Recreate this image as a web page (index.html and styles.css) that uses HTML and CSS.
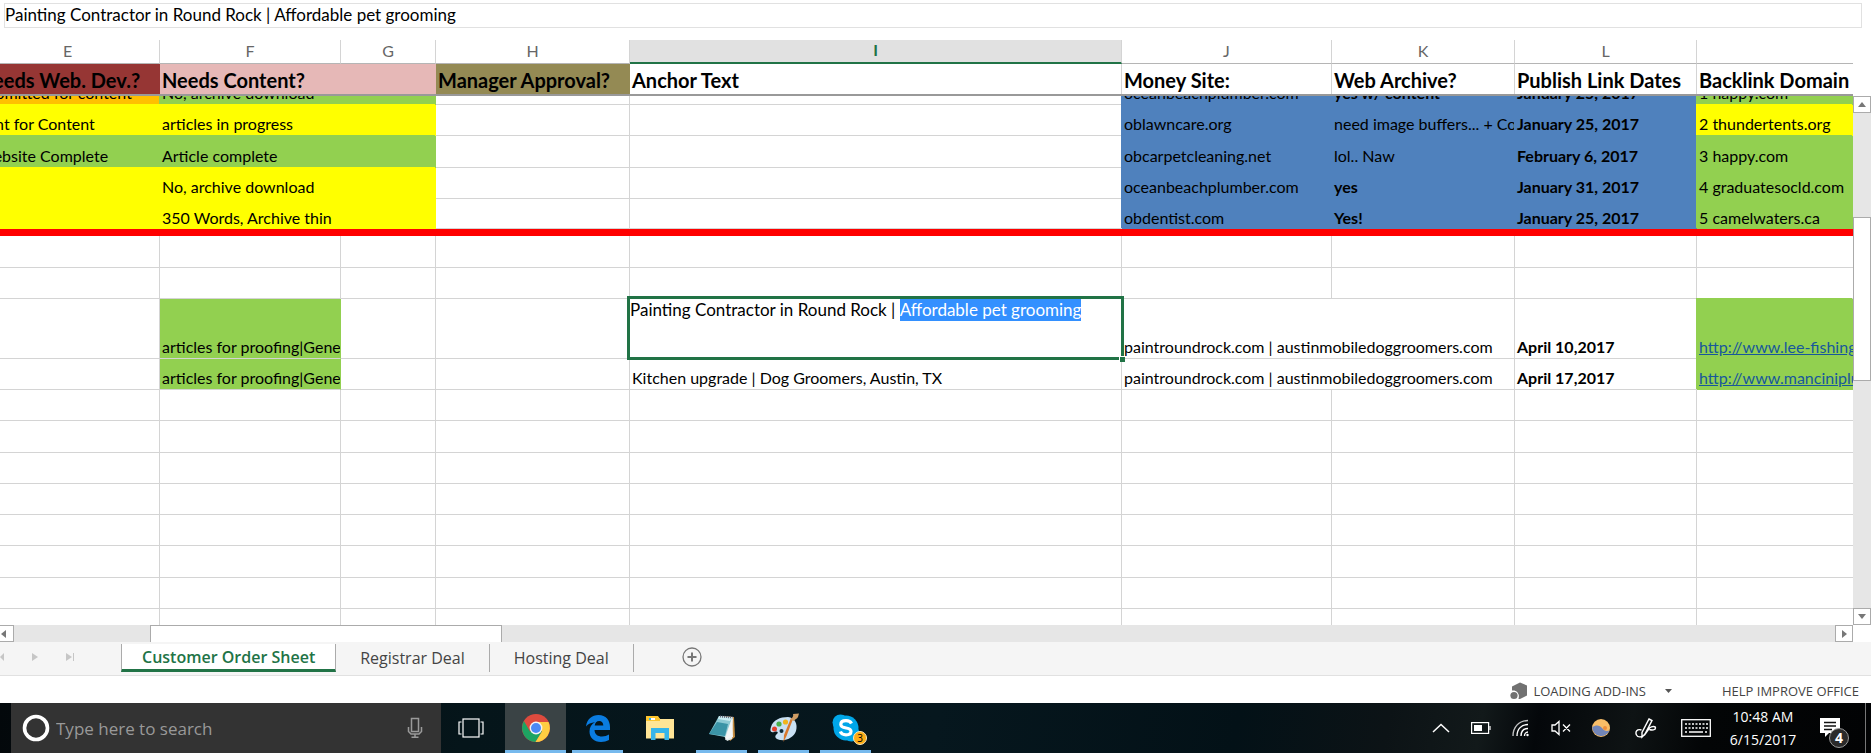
FILE: index.html
```html
<!DOCTYPE html>
<html lang="en">
<head>
    <meta charset="UTF-8">
    <meta name="viewport" content="width=device-width, initial-scale=1.0">
    <title>Customer Order Sheet</title>
    <link rel="stylesheet" href="styles.css">
</head>
<body>
    <!-- Formula bar -->
    <div class="formula-bar">
        <input class="formula-input" type="text" aria-label="Formula bar" value="Painting Contractor in Round Rock | Affordable pet grooming">
    </div>

    <!-- Frozen header rows -->
    <div class="frozen">
        <table class="sheet">
            <colgroup>
                <col class="col-e"><col class="col-f"><col class="col-g"><col class="col-h"><col class="col-i"><col class="col-j"><col class="col-k"><col class="col-l"><col class="col-m">
            </colgroup>
            <tr class="letters">
                <th>E</th><th>F</th><th>G</th><th>H</th><th class="current">I</th><th>J</th><th>K</th><th>L</th><th></th>
            </tr>
            <tr class="titles">
                <th class="maroon">Needs Web. Dev.?</th>
                <th class="pink">Needs Content?</th>
                <th class="pink"></th>
                <th class="olive">Manager Approval?</th>
                <th>Anchor Text</th>
                <th>Money Site:</th>
                <th>Web Archive?</th>
                <th>Publish Link Dates</th>
                <th>Backlink Domain</th>
            </tr>
        </table>
    </div>

    <!-- Scrolling cells -->
    <div class="grid-area">
        <div class="cells">
            <table class="sheet body-rows">
                <colgroup>
                    <col class="col-e"><col class="col-f"><col class="col-g"><col class="col-h"><col class="col-i"><col class="col-j"><col class="col-k"><col class="col-l"><col class="col-m">
                </colgroup>
                <tr>
                    <td class="orange">Submitted for content</td><td class="green">No, archive download</td><td class="green"></td><td></td><td></td>
                    <td class="blue">oceanbeachplumber.com</td><td class="blue bold">yes w/ content</td><td class="blue bold">January 25, 2017</td><td class="green">1 happy.com</td>
                </tr>
                <tr>
                    <td class="yellow">Sent for Content</td><td class="yellow">articles in progress</td><td class="yellow"></td><td></td><td></td>
                    <td class="blue">oblawncare.org</td><td class="blue">need image buffers... + Content</td><td class="blue bold">January 25, 2017</td><td class="yellow">2 thundertents.org</td>
                </tr>
                <tr class="tall">
                    <td class="green">Website Complete</td><td class="green">Article complete</td><td class="green"></td><td></td><td></td>
                    <td class="blue">obcarpetcleaning.net</td><td class="blue">lol.. Naw</td><td class="blue bold">February 6, 2017</td><td class="green">3 happy.com</td>
                </tr>
                <tr>
                    <td class="yellow"></td><td class="yellow">No, archive download</td><td class="yellow"></td><td></td><td></td>
                    <td class="blue">oceanbeachplumber.com</td><td class="blue bold">yes</td><td class="blue bold">January 31, 2017</td><td class="green">4 graduatesocld.com</td>
                </tr>
                <tr class="short">
                    <td class="yellow"></td><td class="yellow">350 Words, Archive thin</td><td class="yellow"></td><td></td><td></td>
                    <td class="blue">obdentist.com</td><td class="blue bold">Yes!</td><td class="blue bold">January 25, 2017</td><td class="green">5 camelwaters.ca</td>
                </tr>
                <tr class="divider"><td colspan="9"></td></tr>
                <tr class="tall"><td></td><td></td><td></td><td></td><td></td><td></td><td></td><td></td><td></td></tr>
                <tr><td></td><td></td><td></td><td></td><td></td><td></td><td></td><td></td><td></td></tr>
                <tr class="double">
                    <td></td><td class="green lined">articles for proofing|General</td><td></td><td></td>
                    <td class="active-cell">
                        <div class="editor" contenteditable="true" role="textbox" aria-label="Cell editor">Painting Contractor in Round Rock | <mark>Affordable pet grooming</mark></div>
                        <span class="fill-handle"></span>
                    </td>
                    <td colspan="2">paintroundrock.com | austinmobiledoggroomers.com</td><td class="bold">April 10,2017</td>
                    <td class="green"><a href="#">http://www.lee-fishing.com</a></td>
                </tr>
                <tr>
                    <td></td><td class="green lined">articles for proofing|General</td><td></td><td></td>
                    <td>Kitchen upgrade | Dog Groomers, Austin, TX</td>
                    <td colspan="2">paintroundrock.com | austinmobiledoggroomers.com</td><td class="bold">April 17,2017</td>
                    <td class="green"><a href="#">http://www.manciniplumbing.com</a></td>
                </tr>
                <tr><td></td><td></td><td></td><td></td><td></td><td></td><td></td><td></td><td></td></tr>
                <tr class="tall"><td></td><td></td><td></td><td></td><td></td><td></td><td></td><td></td><td></td></tr>
                <tr><td></td><td></td><td></td><td></td><td></td><td></td><td></td><td></td><td></td></tr>
                <tr><td></td><td></td><td></td><td></td><td></td><td></td><td></td><td></td><td></td></tr>
                <tr><td></td><td></td><td></td><td></td><td></td><td></td><td></td><td></td><td></td></tr>
                <tr class="tall"><td></td><td></td><td></td><td></td><td></td><td></td><td></td><td></td><td></td></tr>
                <tr><td></td><td></td><td></td><td></td><td></td><td></td><td></td><td></td><td></td></tr>
                <tr><td></td><td></td><td></td><td></td><td></td><td></td><td></td><td></td><td></td></tr>
            </table>
        </div>
        <div class="v-scroll">
            <button class="scroll-btn" aria-label="Scroll up"><svg width="8" height="5"><path d="M0 5L4 0L8 5z"/></svg></button>
            <div class="v-track"><div class="v-thumb"></div></div>
            <button class="scroll-btn" aria-label="Scroll down"><svg width="8" height="5"><path d="M0 0H8L4 5z"/></svg></button>
        </div>
    </div>

    <div class="h-scroll">
        <button class="scroll-btn left" aria-label="Scroll left"><svg width="5" height="8"><path d="M5 0V8L0 4z"/></svg></button>
        <div class="h-track"><div class="h-thumb"></div></div>
        <button class="scroll-btn" aria-label="Scroll right"><svg width="5" height="8"><path d="M0 0V8L5 4z"/></svg></button>
        <div class="corner"></div>
    </div>

    <!-- Sheet tabs -->
    <div class="tab-bar">
        <div class="tab-nav">
            <button aria-label="Previous sheet"><svg width="4" height="8"><path d="M4 0V8L0 4z"/></svg></button>
            <button aria-label="Next sheet"><svg width="6" height="8"><path d="M0 0V8L6 4z"/></svg></button>
            <button aria-label="Last sheet"><svg width="8" height="8"><path d="M0 0V8L6 4zM7 0H8V8H7z"/></svg></button>
        </div>
        <button class="tab selected">Customer Order Sheet</button>
        <button class="tab">Registrar Deal</button>
        <button class="tab">Hosting Deal</button>
        <button class="add-sheet" aria-label="New sheet">
            <svg width="20" height="20" fill="none" stroke="#777"><circle cx="10" cy="10" r="9" stroke-width="1.3"/><path d="M10 5.5V14.5M5.5 10H14.5" stroke-width="2"/></svg>
        </button>
    </div>

    <!-- Status bar -->
    <div class="status-bar">
        <button class="addins">
            <svg width="18" height="18" fill="#717171"><path d="M2 4.5L10 0.5L17 3.5V13.5L10 17H8.5C9.5 13.5 8 10 4.5 8.5H2z"/><circle cx="4" cy="13.5" r="4.6" fill="#fff"/><circle cx="4" cy="13.5" r="3.6"/></svg>
            LOADING ADD-INS
            <svg class="caret" width="7" height="4" fill="#555"><path d="M0 0H7L3.5 4z"/></svg>
        </button>
        <a class="help-link" href="#">HELP IMPROVE OFFICE</a>
    </div>

    <!-- Windows taskbar -->
    <div class="taskbar">
        <div class="search">
            <svg width="28" height="28" fill="none"><circle cx="14" cy="14" r="11.5" stroke="#fff" stroke-width="3.6"/></svg>
            <input type="text" aria-label="Search" placeholder="Type here to search">
            <svg width="16" height="22" fill="none" stroke="#9a9a9a" stroke-width="1.5"><rect x="4.5" y="1.5" width="7" height="13"/><path d="M1.5 10V14.5L4 17H12L14.5 14.5V10M8 17V20M4.5 20.2H11.5"/></svg>
        </div>
        <button class="task-view" aria-label="Task view">
            <svg width="26" height="20" fill="none" stroke="#fff" stroke-width="1.2"><rect x="5" y="1" width="16" height="18"/><path d="M3.5 4H1V16H3.5M22.5 4H25V16H22.5"/></svg>
        </button>
        <div class="apps">
            <button class="app running focused" aria-label="Chrome">
                <svg width="28" height="28" viewBox="0 0 28 28">
                    <circle cx="14" cy="14" r="14" fill="#dd4b3e"/>
                    <path d="M1.9 7A14 14 0 0 0 13.5 28L20 17.5L14 14L8 17.5z" fill="#1da462"/>
                    <path d="M14 8H26.5A14 14 0 0 1 13.5 28L20 17.5z" fill="#ffcd42"/>
                    <circle cx="14" cy="14" r="6.4" fill="#f4f4f4"/><circle cx="14" cy="14" r="5" fill="#4a89f5"/>
                </svg>
            </button>
            <button class="app running" aria-label="Edge">
                <svg width="26" height="28" viewBox="0 0 26 28"><path d="M1 12.5C2 5 7 1 13.5 1C21 1 25 6.5 25 13V16H9.5C9.7 20.5 13 22.5 17 22.5C19.7 22.5 22 21.8 24 20.5V26C21.7 27.3 19 28 16 28C9 28 4.5 23.5 4.5 17.5C4.5 13.5 6.5 10 10 8.3C6 8.5 3 10 1 12.5zM9.7 11.5H18.3C18.2 8.7 16.8 7 14.2 7C11.6 7 10 8.8 9.7 11.5z" fill="#0a7ce0"/></svg>
            </button>
            <button class="app" aria-label="File Explorer">
                <svg width="28" height="24" viewBox="0 0 28 24">
                    <path d="M0 1H12L14 3H28V22.5H0z" fill="#ffe596"/><path d="M1 0H12L14 3V5H0V0z" fill="#fdc62e"/><path d="M3 2H9V4H3z" fill="#fff"/><path d="M3 2H5V4H3z" fill="#35b5ea"/>
                    <path d="M5 12H23V24H18.5V17H9.5V24H5z" fill="#35b5ea"/>
                </svg>
            </button>
            <button class="app running" aria-label="Notepad">
                <svg width="28" height="28" viewBox="0 0 28 28">
                    <path d="M11 2L26 3L27 23L22 27z" fill="#c58c3f"/><path d="M12 2L25 3L24 25L19 27L16 22z" fill="#e4ecec"/>
                    <path d="M11 2L24 4L17 23L1 20z" fill="#8cc9d4"/><path d="M9 8L20 10L17 22L1 20z" fill="#3b94a7"/><path d="M11 2L24 4L22 7L10 5z" fill="#c9ecf0"/><path d="M24 4L25 23L17 26z" fill="#f4f6f6"/>
                    <path d="M12 2.5L24.5 3.5" stroke="#667" stroke-width="2" stroke-dasharray="1 1"/>
                </svg>
            </button>
            <button class="app running" aria-label="Paint">
                <svg width="30" height="30" viewBox="0 0 30 30">
                    <path d="M2 14C4 7 11 4 19 4C26 5 29 11 27 18C25 24 18 28 11 27C6 26 5 23 8 21C10 19 8 18 5 19C1 20 1 17 2 14z" fill="#c9e0f3"/>
                    <circle cx="5.5" cy="16" r="2.5" fill="#e2402d"/><circle cx="10" cy="11" r="2.6" fill="#49b04b"/><circle cx="16.5" cy="9" r="2.6" fill="#f1b51c"/><circle cx="12.5" cy="18" r="2" fill="#0c2a3a"/>
                    <path d="M24 6L17.5 23L14.5 29L15 22L22 5z" fill="#d9782d"/><path d="M22 7C22 5 25 4 24 1L30 0.5L29 4C28 6 26 6 25 8z" fill="#cf9d64"/>
                </svg>
            </button>
            <button class="app running" aria-label="Skype, 3 unread">
                <svg width="28" height="28" viewBox="0 0 28 28">
                    <circle cx="8.5" cy="8.5" r="8" fill="#00a6e8"/><circle cx="19.5" cy="19.5" r="8" fill="#00a6e8"/><circle cx="14" cy="14" r="12.5" fill="#00a6e8"/>
                    <path d="M19.5 9.5C18.5 7.5 16.5 6.7 14 6.7C11 6.7 8.8 8 8.8 10.4C8.8 15.5 19 12.5 19 17.2C19 19.5 16.8 20.8 14 20.8C11 20.8 9.2 19.7 8.3 17.5" fill="none" stroke="#fff" stroke-width="3.2"/>
                </svg>
                <span class="unread">3</span>
            </button>
        </div>
        <div class="tray">
            <button aria-label="Show hidden icons"><svg width="18" height="10" fill="none" stroke="#fff" stroke-width="1.5"><path d="M1 9L9 1.5L17 9"/></svg></button>
            <button aria-label="Battery"><svg width="20" height="12" fill="none" stroke="#fff" stroke-width="1.2"><rect x="0.6" y="0.6" width="17" height="10.8"/><path d="M19 4V8"/><rect x="3" y="3" width="8" height="6" fill="#fff" stroke="none"/></svg></button>
            <button aria-label="Network"><svg width="18" height="18" fill="none" stroke="#fff" stroke-width="1.4"><path d="M1 17C1 8 7 1.5 16 1.5" opacity=".75"/><path d="M5 17C5 10 9.5 5.5 16 5.5"/><path d="M9 17C9 12.5 11.5 9.5 16 9.5"/><path d="M12.5 17C12.5 15 14 13 16 13"/><circle cx="15.5" cy="16" r="1.2" fill="#fff" stroke="none"/></svg></button>
            <button aria-label="Volume muted"><svg width="20" height="16" fill="none" stroke="#fff" stroke-width="1.3"><path d="M1 5H4L8 1.5V14.5L4 11H1zM12 4.5L19 11.5M19 4.5L12 11.5"/></svg></button>
            <button aria-label="f.lux"><svg width="18" height="18"><circle cx="9" cy="9" r="9" fill="#f8bd67"/><circle cx="13" cy="9" r="2" fill="#ef8e3b"/><path d="M0.2 8C4 5.5 8 6 10 9C12 12 14.5 12.5 17.5 11.5A9 9 0 0 1 0.2 8z" fill="#7185b8"/></svg></button>
            <button class="wide" aria-label="Pen workspace"><svg width="22" height="22" fill="none" stroke="#fff" stroke-width="1.4"><path d="M14 2L17 3.5L10 17L7 20V15.5zM6.5 13C2 11.5 0 15 1.5 18C3 21 7 20 9.5 18L14.5 11C17 9 20.5 9 20.5 11C20.5 13 17 13.5 14.5 12.5"/></svg></button>
            <button class="wide" aria-label="Touch keyboard"><svg width="30" height="18" fill="none" stroke="#fff" stroke-width="1.3"><rect x="0.7" y="0.7" width="28.6" height="16.6"/><path d="M4 5H27M4 9H27" stroke-dasharray="2 1.5"/><path d="M4 13H6M8 13H22M24 13H26"/></svg></button>
            <button class="clock"><span>10:48 AM</span><span>6/15/2017</span></button>
            <button class="notices" aria-label="Notifications, 4 new">
                <svg width="20" height="20"><path d="M0 0H20V15H9L5 19V15H0z" fill="#fff"/><path d="M4 4.5H16M4 8H16M4 11.5H12" stroke="#111" stroke-width="1.3"/></svg>
                <span class="count">4</span>
            </button>
            <div class="show-desktop"></div>
        </div>
    </div>
</body>
</html>
```
FILE: styles.css
```css
* {
    margin: 0;
    padding: 0;
    box-sizing: border-box;
}

body {
    height: 100vh;
    display: flex;
    flex-direction: column;
    overflow: hidden;
    background: #fff;
    font-family: Lato, "Liberation Sans", sans-serif;
    font-size: 16px;
    color: #000;
}

button {
    border: none;
    background: none;
    font: inherit;
    color: inherit;
}

svg {
    display: block;
    flex-shrink: 0;
}

/* Formula bar */
.formula-bar {
    padding: 3px 9px 12px 4px;
}

.formula-input {
    display: block;
    width: 100%;
    height: 25px;
    padding-bottom: 2px;
    border: 1px solid #e1e1e1;
    font: inherit;
    font-size: 17px;
}

/* Grid */
.sheet {
    width: calc(100% + 24px);
    margin-left: -24px;
    table-layout: fixed;
    border-collapse: separate;
    border-spacing: 0;
}

.col-e { width: 184px; }
.col-f { width: 181px; }
.col-g { width: 95px; }
.col-h { width: 194px; }
.col-i { width: 492px; }
.col-j { width: 210px; }
.col-k { width: 183px; }
.col-l { width: 182px; }

.sheet th,
.sheet td {
    border-right: 1px solid #d4d4d4;
    border-bottom: 1px solid #d4d4d4;
    padding: 0 0 1px 2px;
    line-height: 20px;
    text-align: left;
    vertical-align: bottom;
    white-space: nowrap;
    overflow: hidden;
}

.sheet tr > :last-child {
    border-right: none;
}

.frozen {
    margin-right: 18px;
    overflow: hidden;
    border-bottom: 2px solid #999;
}

.sheet .letters th {
    height: 24px;
    padding: 0 0 2px;
    border-bottom-color: #b5b5b5;
    color: #666;
    font-weight: normal;
    text-align: center;
    vertical-align: middle;
}

.sheet .letters .current {
    background: #e1e1e1;
    border-bottom: 2px solid #217346;
    color: #217346;
    font-weight: bold;
}

.sheet .titles th {
    height: 30px;
    padding-bottom: 0;
    border-bottom: none;
    font-size: 20px;
    line-height: 28px;
}

.sheet .maroon { background: #963634; border-color: #963634; }
.sheet .pink { background: #e6b8b7; border-color: #e6b8b7; }
.sheet .olive { background: #948a54; border-color: #948a54; }
.sheet .orange { background: #ffc000; border-color: #ffc000; }
.sheet .yellow { background: #ff0; border-color: #ff0; }
.sheet .green { background: #92d050; border-color: #92d050; }
.sheet .blue { background: #4f81bd; border-color: #4f81bd; }
.sheet .bold { font-weight: bold; }

/* fills cover the grid lines above and to the left */
.body-rows .orange { box-shadow: -1px -1px 0 #ffc000; }
.body-rows .yellow { box-shadow: -1px -1px 0 #ff0; }
.body-rows .green { box-shadow: -1px -1px 0 #92d050; }
.body-rows .blue { box-shadow: -1px -1px 0 #4f81bd; }

.sheet .green.lined {
    border-bottom-color: #d4d4d4;
    box-shadow: none;
}

.grid-area {
    flex: 1;
    min-height: 0;
    display: flex;
}

.cells {
    flex: 1;
    min-width: 0;
    overflow: hidden;
}

/* the first row is half scrolled under the header */
.body-rows {
    margin-top: -22px;
}

.sheet td { height: 31px; }
.sheet .tall td { height: 32px; }
.sheet .short td { height: 30px; padding-bottom: 0; }
.sheet .double td { height: 60px; }

.sheet .divider td {
    height: 7px;
    border: none;
    background: #f00;
    line-height: 0;
}

.sheet a {
    color: #17579c;
}

.sheet .active-cell {
    position: relative;
    overflow: visible;
}

.editor {
    position: absolute;
    inset: -3px -3px -2px;
    border: 3px solid #217346;
    background: #fff;
    font-size: 17px;
    white-space: normal;
    line-height: 22px;
}

.editor mark {
    display: inline-block;
    background: #3390ff;
    color: #fff;
}

.fill-handle {
    position: absolute;
    right: -4px;
    bottom: -4px;
    width: 6px;
    height: 6px;
    background: #217346;
    border-left: 1px solid #fff;
    border-top: 1px solid #fff;
}

/* Scroll bars */
.scroll-btn {
    width: 18px;
    height: 17px;
    flex-shrink: 0;
    display: flex;
    align-items: center;
    justify-content: center;
    border: 1px solid #ababab;
    background: #fff;
    fill: #777;
}

.scroll-btn.left {
    width: 14px;
    padding-right: 6px;
    border-left: none;
}

.v-scroll {
    width: 18px;
    display: flex;
    flex-direction: column;
}

.v-track {
    flex: 1;
    padding-top: 104px;
    background: #e6e6e6;
}

.v-thumb {
    height: 164px;
    border: 1px solid #ababab;
    background: #fff;
}

.h-scroll {
    display: flex;
    height: 17px;
}

.h-track {
    flex: 1;
    padding-left: 136px;
    background: #e6e6e6;
}

.h-thumb {
    width: 352px;
    height: 17px;
    border: 1px solid #ababab;
    border-bottom: none;
    background: #fff;
}

.corner {
    width: 18px;
}

/* Sheet tabs */
.tab-bar {
    display: flex;
    align-items: flex-start;
    height: 34px;
    padding-top: 2px;
    background: #f5f5f5;
    border-bottom: 1px solid #e1e1e1;
    font-family: "Open Sans", sans-serif;
    color: #444;
}

.tab-nav {
    display: flex;
    gap: 28px;
    width: 121px;
    padding-top: 9px;
    fill: #c6c6c6;
}

.tab {
    height: 28px;
    padding: 0 24px;
    border-right: 1px solid #ababab;
    line-height: 24px;
}

.tab.selected {
    padding: 0 20px;
    background: #fff;
    border-left: 1px solid #ababab;
    border-bottom: 3px solid #217346;
    color: #217346;
    font-weight: 600;
}

.add-sheet {
    margin: 3px 0 0 48px;
}

/* Status bar */
.status-bar {
    display: flex;
    justify-content: flex-end;
    align-items: center;
    gap: 50px;
    height: 27px;
    padding: 2px 12px 0 0;
    font-family: "Open Sans", sans-serif;
    font-size: 13px;
    color: #444;
}

.addins {
    display: flex;
    align-items: center;
    gap: 5px;
}

.caret {
    margin-left: 14px;
}

.help-link {
    color: inherit;
    text-decoration: none;
}

/* Taskbar */
.taskbar {
    display: flex;
    height: 50px;
    padding-left: 11px;
    background: linear-gradient(100deg, #03080b 0%, #05151a 25%, #06171e 50%, #031117 66%, #0c1316 74%, #12191a 79%, #04070a 82%, #0e1314 87%, #030506 91%, #020304 100%);
    font-family: "Open Sans", sans-serif;
    color: #fff;
}

.taskbar button {
    display: flex;
    align-items: center;
    justify-content: center;
}

.search {
    display: flex;
    align-items: center;
    gap: 6px;
    width: 430px;
    padding: 0 18px 0 11px;
    background: #333;
}

.search input {
    flex: 1;
    min-width: 0;
    border: none;
    background: none;
    font: inherit;
    font-size: 17px;
    color: #fff;
}

.search input::placeholder {
    color: #999;
    opacity: 1;
}

.task-view {
    width: 60px;
    margin-right: 4px;
}

.apps {
    display: flex;
    gap: 1px;
}

.taskbar .app {
    position: relative;
    width: 61px;
}

.app.running::after {
    content: "";
    position: absolute;
    left: 5px;
    right: 5px;
    bottom: 0;
    height: 3px;
    background: #76b9ed;
}

.app.focused {
    background: #3a4345;
}

.app.focused::after {
    left: 0;
    right: 0;
}

.unread {
    position: absolute;
    right: 9px;
    bottom: 8px;
    width: 14px;
    height: 14px;
    border: 1px solid #ffe9b8;
    border-radius: 50%;
    background: #fdab13;
    color: #000;
    font-size: 10px;
    line-height: 12px;
    text-align: center;
}

.tray {
    display: flex;
    margin-left: auto;
}

.tray button {
    width: 40px;
}

.tray .wide {
    width: 50px;
}

.tray .clock {
    width: 84px;
    flex-direction: column;
    font-size: 14px;
    line-height: 23px;
}

.tray .notices {
    position: relative;
    width: 60px;
    padding-right: 10px;
}

.count {
    position: absolute;
    right: 16px;
    bottom: 5px;
    width: 20px;
    height: 20px;
    border: 1px solid #999;
    border-radius: 50%;
    background: #2b2b2b;
    font-size: 14px;
    font-weight: bold;
    line-height: 18px;
    text-align: center;
}

.show-desktop {
    width: 6px;
    border-left: 1px solid #777;
}
```
